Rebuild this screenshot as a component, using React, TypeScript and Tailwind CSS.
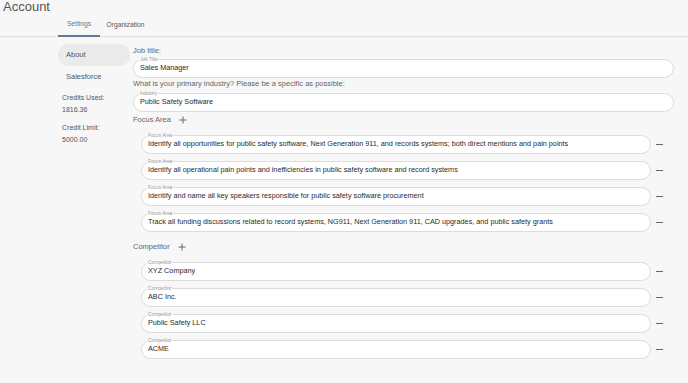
const focusAreas = [
  "Identify all opportunities for public safety software, Next Generation 911, and records systems; both direct mentions and pain points",
  "Identify all operational pain points and inefficiencies in public safety software and record systems",
  "Identify and name all key speakers responsible for public safety software procurement",
  "Track all funding discussions related to record systems, NG911, Next Generation 911, CAD upgrades, and public safety grants",
];

const competitors = ["XYZ Company", "ABC Inc.", "Public Safety LLC", "ACME"];

function Field({ label, value, className = "" }: { label: string; value: string; className?: string }) {
  return (
    <div
      className={`relative h-[19px] rounded-full border border-[#dcdcdc] bg-white flex items-center pl-[6px] ${className}`}
    >
      <span className="absolute left-[5px] top-[-3px] px-[1px] text-[4.8px] leading-[5px] text-[#9a9a9a] bg-[linear-gradient(to_bottom,#f7f7f7_50%,#ffffff_50%)]">
        {label}
      </span>
      <span className="text-[7.25px] text-[#2a2a2a] whitespace-nowrap">{value}</span>
    </div>
  );
}

function Plus() {
  return (
    <svg width="8" height="8" viewBox="0 0 8 8" className="ml-[8px]">
      <path d="M4 0.5V7.5M0.5 4H7.5" stroke="#666" strokeWidth="1" />
    </svg>
  );
}

function Minus() {
  return <div className="ml-[5px] w-[7px] h-[1px] bg-[#666]" />;
}

function ListRow({ label, value }: { label: string; value: string }) {
  return (
    <div className="flex items-center pl-[8px]">
      <Field label={label} value={value} className="w-[510px]" />
      <Minus />
    </div>
  );
}

export default function App() {
  return (
    <div
      className="w-[688px] h-[383px] overflow-hidden bg-[#f7f7f7] text-[#555]"
      style={{ fontFamily: '"Liberation Sans", Arial, sans-serif' }}
    >
      {/* Header */}
      <div className="h-[14px] pl-[3px] text-[13px] leading-[14px] text-[#555]">Account</div>

      {/* Tabs */}
      <div className="h-[23px] border-b border-[#dedede] flex items-stretch pl-[58px]">
        <div className="w-[42px] flex items-center justify-center text-[6.7px] text-[#5f7a93] border-b-2 border-[#5f7a93] -mb-[1px]">
          Settings
        </div>
        <div className="w-[51px] flex items-center justify-center text-[6.7px] text-[#555]">
          Organization
        </div>
      </div>

      <div className="flex">
        {/* Sidebar */}
        <div className="ml-[58px] w-[72px] mt-[7px] flex flex-col text-[7px]">
          <div className="h-[22px] rounded-full bg-[#ebebeb] flex items-center pl-[8px] text-[7.5px]">About</div>
          <div className="h-[22px] flex items-center pl-[8px] text-[7.5px]">Salesforce</div>
          <div className="pl-[4px] mt-[4px] leading-[12px]">Credits Used:</div>
          <div className="pl-[4px] leading-[12px]">1816.36</div>
          <div className="pl-[4px] mt-[6px] leading-[12px]">Credit Limit:</div>
          <div className="pl-[4px] leading-[11px]">5000.00</div>
        </div>

        {/* Main */}
        <div className="ml-[3px] w-[541px] mt-[9px] flex flex-col text-[7.5px] text-[#666]">
          <div className="leading-[10px]">Job title:</div>
          <Field label="Job Title" value="Sales Manager" className="mt-[3px]" />
          <div className="leading-[10px] mt-[1px]">What is your primary industry? Please be a specific as possible:</div>
          <Field label="Industry" value="Public Safety Software" className="mt-[4px]" />

          <div className="mt-[2px] h-[12px] flex items-center">
            <span>Focus Area</span>
            <Plus />
          </div>
          <div className="mt-[9px] flex flex-col gap-[7px]">
            {focusAreas.map((f) => (
              <ListRow key={f} label="Focus Area" value={f} />
            ))}
          </div>

          <div className="mt-[9px] h-[12px] flex items-center">
            <span>Competitor</span>
            <Plus />
          </div>
          <div className="mt-[9px] flex flex-col gap-[7px]">
            {competitors.map((c) => (
              <ListRow key={c} label="Competitor" value={c} />
            ))}
          </div>
        </div>
      </div>
    </div>
  );
}
